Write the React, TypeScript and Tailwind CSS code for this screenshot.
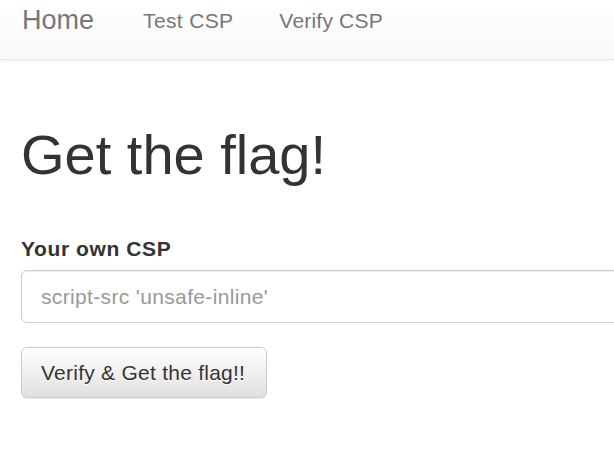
export default function App() {
  return (
    <div className="w-full h-[452px] overflow-hidden bg-white font-['Liberation_Sans',Arial,sans-serif] text-[#333]">
      <nav className="h-[60px] border-b border-[#e7e7e7] bg-[linear-gradient(to_bottom,#ffffff,#f8f8f8)] shadow-[0_1px_5px_rgba(0,0,0,0.075)] flex items-start">
        <a className="ml-[22px] pt-[7px] text-[27px] leading-[27px] text-[#777]">Home</a>
        <ul className="flex gap-[46px] ml-[49px] pt-[10px]">
          <li className="text-[21px] leading-[21px] tracking-[0.35px] text-[#777]">Test CSP</li>
          <li className="text-[21px] leading-[21px] tracking-[0.2px] text-[#777]">Verify CSP</li>
        </ul>
      </nav>

      <main className="pl-[21px]">
        <h1 className="mt-[65px] text-[56px] leading-[60px] font-normal text-[#333]">Get the flag!</h1>

        <form className="mt-[53px]">
          <label className="block text-[21px] leading-[21px] font-bold tracking-[0.6px] text-[#333]">Your own CSP</label>
          <input
            type="text"
            placeholder="script-src 'unsafe-inline'"
            className="mt-[11px] block w-[720px] h-[53px] px-[19px] rounded-[6px] border border-[#ccc] bg-white text-[21px] tracking-[0.35px] text-[#555] placeholder:text-[#999] shadow-[inset_0_1px_1px_rgba(0,0,0,0.075)] outline-none"
          />
          <button
            type="button"
            className="mt-[24px] block w-[246px] h-[51px] pl-[19px] text-left rounded-[6px] border border-[#ccc] bg-[linear-gradient(to_bottom,#ffffff,#e0e0e0)] text-[21px] tracking-[0.25px] text-[#333] [text-shadow:0_1px_0_#fff] shadow-[0_1px_1px_rgba(0,0,0,0.075)]"
          >
            Verify &amp; Get the flag!!
          </button>
        </form>
      </main>
    </div>
  );
}
